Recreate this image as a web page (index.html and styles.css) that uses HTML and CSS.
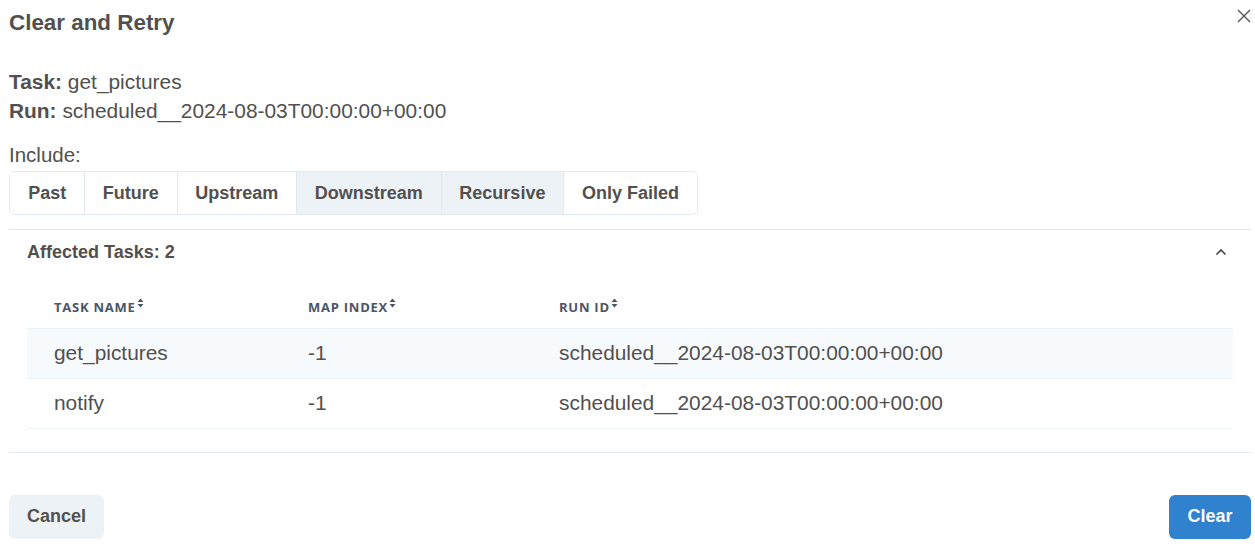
FILE: index.html
```html
<!DOCTYPE html>
<html>
<head>
<meta charset="utf-8">
<link rel="stylesheet" href="styles.css">
</head>
<body>
<div class="modal">
  <header class="modal-header">
    <h2 class="title">Clear and Retry</h2>
    <button class="close" aria-label="Close">
      <svg width="14" height="14" viewBox="0 0 14 14"><path d="M1 1 L13 13 M13 1 L1 13" stroke="#555" stroke-width="1.4" fill="none"/></svg>
    </button>
  </header>
  <section class="info">
    <div><b>Task:</b> get_pictures</div>
    <div><b>Run:</b> scheduled__2024-08-03T00:00:00+00:00</div>
  </section>
  <div class="include-label">Include:</div>
  <div class="btn-group">
    <button class="opt">Past</button>
    <button class="opt">Future</button>
    <button class="opt">Upstream</button>
    <button class="opt active">Downstream</button>
    <button class="opt active">Recursive</button>
    <button class="opt">Only Failed</button>
  </div>
  <div class="accordion">
    <button class="acc-btn">
      <span>Affected Tasks: 2</span>
      <svg width="12" height="8" viewBox="0 0 12 8"><path d="M1.5 6.5 L6 2 L10.5 6.5" stroke="#444" stroke-width="1.6" fill="none"/></svg>
    </button>
    <div class="acc-panel">
      <table class="tbl">
        <thead>
          <tr>
            <th class="c1">Task Name<span class="sort"><svg width="7" height="10" viewBox="0 0 7 10"><path d="M3.5 0.5 L6.5 4 L0.5 4 Z M0.5 6 L6.5 6 L3.5 9.5 Z" fill="#4a5568"/></svg></span></th>
            <th class="c2">Map Index<span class="sort"><svg width="7" height="10" viewBox="0 0 7 10"><path d="M3.5 0.5 L6.5 4 L0.5 4 Z M0.5 6 L6.5 6 L3.5 9.5 Z" fill="#4a5568"/></svg></span></th>
            <th class="c3">Run Id<span class="sort"><svg width="7" height="10" viewBox="0 0 7 10"><path d="M3.5 0.5 L6.5 4 L0.5 4 Z M0.5 6 L6.5 6 L3.5 9.5 Z" fill="#4a5568"/></svg></span></th>
          </tr>
        </thead>
        <tbody>
          <tr class="striped">
            <td>get_pictures</td>
            <td>-1</td>
            <td>scheduled__2024-08-03T00:00:00+00:00</td>
          </tr>
          <tr>
            <td>notify</td>
            <td>-1</td>
            <td>scheduled__2024-08-03T00:00:00+00:00</td>
          </tr>
        </tbody>
      </table>
    </div>
  </div>
  <footer class="footer">
    <button class="btn cancel">Cancel</button>
    <button class="btn primary">Clear</button>
  </footer>
</div>
</body>
</html>
```
FILE: styles.css
```css
* { box-sizing: border-box; }
html, body { margin: 0; padding: 0; background: #fff; }
body {
  font-family: "Liberation Sans", Arial, sans-serif;
  color: #51504f;
}
button { font-family: inherit; cursor: pointer; }
.modal {
  width: 1255px;
  height: 544px;
  padding: 0 4px 0 9px;
  display: flex;
  flex-direction: column;
  overflow: hidden;
}
.modal-header {
  display: flex;
  justify-content: space-between;
  align-items: flex-start;
  margin-top: 8px;
}
.title {
  margin: 0;
  font-size: 22.4px;
  line-height: 30px;
  font-weight: 700;
  color: #51504f;
}
.close {
  border: none;
  background: none;
  padding: 0;
  margin: 1px 0 0 0;
  width: 14px;
  height: 14px;
  display: flex;
}
.info {
  margin-top: 29px;
  font-size: 20.9px;
  line-height: 29px;
}
.info b { font-weight: 700; }
.include-label {
  margin-top: 16px;
  font-size: 20.5px;
  line-height: 28px;
}
.btn-group {
  margin-top: 2px;
  display: flex;
  align-self: flex-start;
  border: 1px solid #e2e8f0;
  border-radius: 6px;
  overflow: hidden;
  height: 44px;
}
.opt {
  border: none;
  border-left: 1px solid #e2e8f0;
  background: #fff;
  font-size: 18px;
  font-weight: 700;
  color: #51504f;
  padding: 0 17.75px;
  height: 42px;
}
.opt:first-child { border-left: none; padding-left: 18.25px; }
.opt.active { background: #edf2f7; }
.accordion {
  margin-top: 14px;
  border-top: 1px solid #e2e8f0;
  border-bottom: 1px solid #e2e8f0;
}
.acc-btn {
  width: 100%;
  display: flex;
  justify-content: space-between;
  align-items: center;
  border: none;
  background: none;
  padding: 8px 24px 4px 18px;
  height: 40px;
  font-size: 18px;
  font-weight: 700;
  color: #51504f;
  text-align: left;
}
.acc-panel {
  padding: 12px 18px 23px 18px;
}
.tbl {
  width: 100%;
  border-collapse: collapse;
}
.tbl th {
  font-family: "Open Sans", "Liberation Sans", sans-serif;
  font-size: 13px;
  font-weight: 700;
  text-transform: uppercase;
  letter-spacing: 0.75px;
  color: #4a5568;
  text-align: left;
  height: 46px;
  padding: 4px 0 0 27px;
  border-bottom: 1px solid #edf2f7;
  vertical-align: middle;
}
.tbl th.c1 { width: 254px; }
.tbl th.c2 { width: 251px; }
.sort {
  display: inline-block;
  margin-left: 1px;
  vertical-align: 4px;
}
.sort svg { display: block; }
.tbl td {
  font-size: 20.9px;
  height: 50px;
  padding: 0 0 0 27px;
  border-bottom: 1px solid #edf2f7;
  color: #51504f;
}
.tbl tr.striped td { background: #f7fafc; }
.footer {
  margin-top: 42px;
  display: flex;
  justify-content: space-between;
}
.btn {
  height: 44px;
  border: none;
  border-radius: 6px;
  padding: 0 18px;
  font-size: 18px;
  font-weight: 700;
}
.cancel { background: #edf2f7; color: #51504f; }
.primary { background: #3182ce; color: #fff; padding: 0 18.5px; }
```
